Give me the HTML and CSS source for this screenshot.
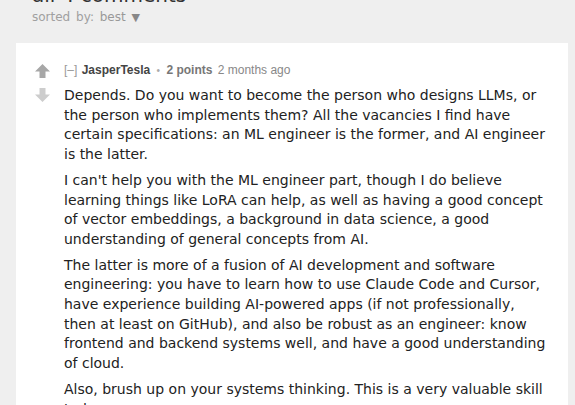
FILE: index.html
```html
<!DOCTYPE html>
<html lang="en">
<head>
  <meta charset="UTF-8" />
  <title>all 4 comments</title>
  <link rel="stylesheet" href="styles.css">
</head>
<body>
  <div class="comments-head">
    <h2>all 4 comments</h2>
    <div class="sort">sorted by: <span class="sort-value">best</span> <span class="caret">&#9660;</span></div>
  </div>

  <div class="comment">
    <div class="votes">
      <svg class="arrow up" width="15" height="14" viewBox="0 0 15 14"><path d="M7.5 0 L15 7.5 H10.5 V14 H4.5 V7.5 H0 Z"/></svg>
      <svg class="arrow down" width="15" height="14" viewBox="0 0 15 14"><path d="M7.5 14 L15 6.5 H10.5 V0 H4.5 V6.5 H0 Z"/></svg>
    </div>
    <div class="entry">
      <div class="tagline">
        <span class="expand">[&ndash;]</span>
        <span class="author">JasperTesla</span>
        <span class="dot">&bull;</span>
        <span class="score">2 points</span>
        <span class="time">2 months ago</span>
      </div>
      <div class="md">
        <p>Depends. Do you want to become the person who designs LLMs, or the person who implements them? All the vacancies I find have certain specifications: an ML engineer is the former, and AI engineer is the latter.</p>
        <p>I can't help you with the ML engineer part, though I do believe learning things like LoRA can help, as well as having a good concept of vector embeddings, a background in data science, a good understanding of general concepts from AI.</p>
        <p>The latter is more of a fusion of AI development and software engineering: you have to learn how to use Claude Code and Cursor, have experience building AI-powered apps (if not professionally, then at least on GitHub), and also be robust as an engineer: know frontend and backend systems well, and have a good understanding of cloud.</p>
        <p>Also, brush up on your systems thinking. This is a very valuable skill today.</p>
      </div>
    </div>
  </div>
</body>
</html>
```

FILE: styles.css
```css
body {
  margin: 0;
  background: #efefef;
  font-family: "DejaVu Sans", Verdana, sans-serif;
  overflow: hidden;
}
.comments-head {
  display: flow-root;
  padding-left: 32px;
  height: 43px;
}
.comments-head h2 {
  margin: -17px 0 0;
  font-size: 20px;
  font-weight: normal;
  line-height: 24px;
  color: #333;
}
.sort {
  margin-top: 3px;
  font-size: 12px;
  line-height: 14px;
  color: #a0a0a0;
  word-spacing: 2px;
}
.sort-value {
  color: #999;
}
.caret {
  color: #888;
  font-size: 11px;
}
.comment {
  display: flex;
  margin: 0 7px 0 16px;
  padding: 20px 20px 0 19px;
  background: #fff;
  min-height: 400px;
}
.votes {
  display: flex;
  flex-direction: column;
  gap: 10px;
  padding-top: 1px;
  width: 15px;
}
.arrow.up {
  fill: #a7a7a7;
}
.arrow.down {
  fill: #cdcdcd;
}
.entry {
  margin-left: 14px;
  flex: 1;
}
.tagline {
  font-family: "Liberation Sans", Arial, sans-serif;
  font-size: 12px;
  line-height: 14px;
  color: #888;
}
.expand {
  color: #999;
  margin-right: 1px;
}
.author {
  font-weight: bold;
  color: #444;
}
.dot {
  color: #aaa;
  font-size: 10px;
  margin: 0 3px;
}
.score {
  font-weight: bold;
  color: #777;
  margin-right: 2px;
}
.md {
  margin-top: 8px;
  font-size: 14px;
  line-height: 19.7px;
  color: #222;
}
.md p {
  margin: 0 0 6px;
}
```
